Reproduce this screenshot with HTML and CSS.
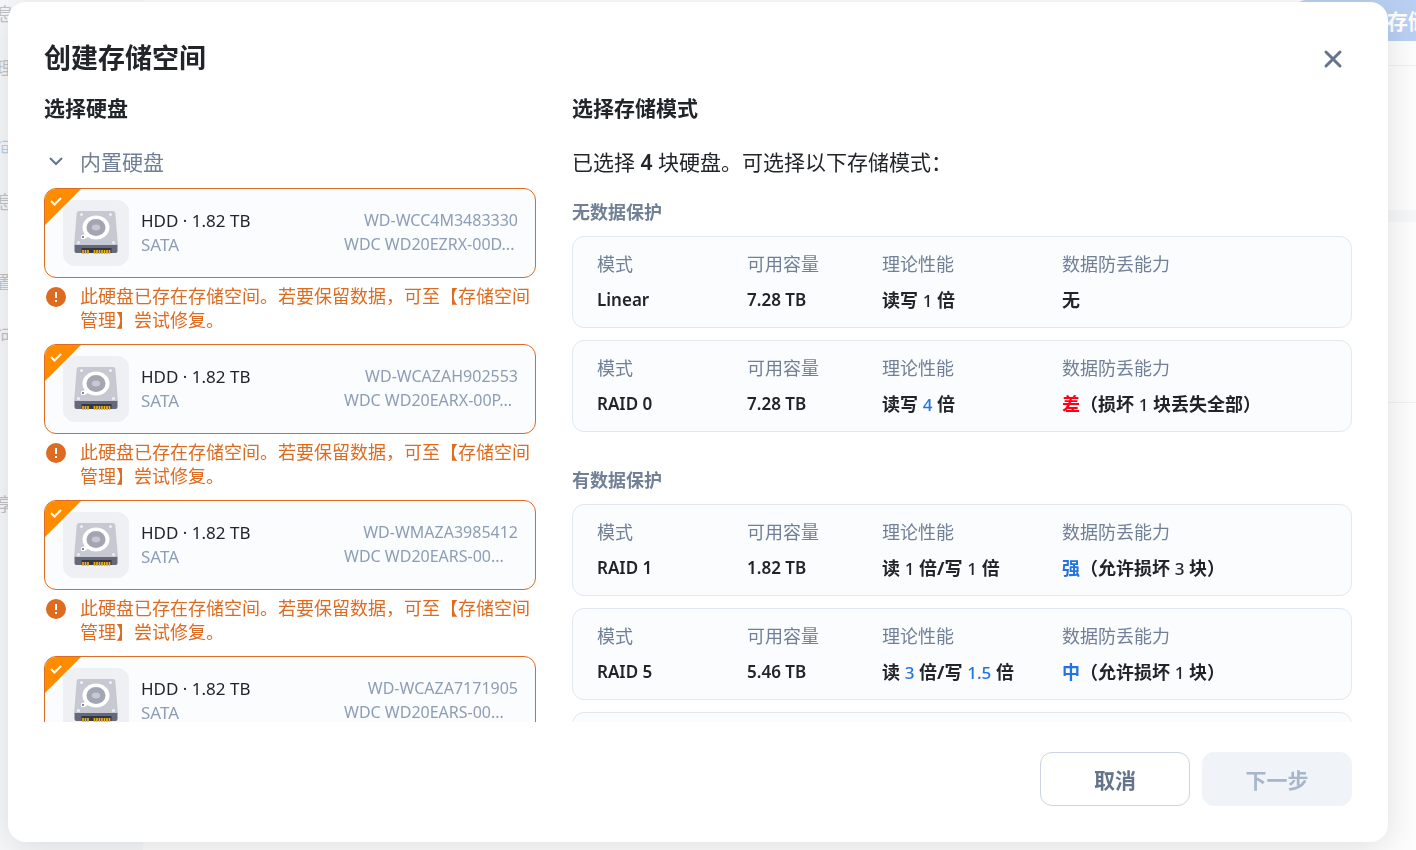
FILE: index.html
```html
<!DOCTYPE html>
<html lang="zh-CN">
<head>
<meta charset="utf-8">
<meta name="viewport" content="width=device-width, initial-scale=1">
<title>创建存储空间</title>
<link rel="stylesheet" href="styles.css">
</head>
<body>
<svg class="defs" aria-hidden="true">
  <symbol id="drive" viewBox="0 0 66 66">
    <path d="M16 11h34q2 0 2.300 2l2.700 33h-44l2.700-33q.3-2 2.300-2z" fill="#c6c8d2"/>
    <path d="M12 45h42q.5 0 .5 1v5q0 2-2 2h-39q-2 0-2-2v-5q0-1 .5-1z" fill="#666979"/>
    <path d="M18.500 48h30v5h-30z" fill="#343745"/>
    <path d="M20 50v4M22.500 50v4M25 50v4M31.500 50v4M34 50v4M36.500 50v4M39 50v4M41.500 50v4M44 50v4M46.500 50v4" stroke="#edb41c" stroke-width="1.700"/>
    <g fill="#eff0f5"><circle cx="18.500" cy="14.500" r="1.500"/><circle cx="47.500" cy="14.500" r="1.500"/><circle cx="15.500" cy="42.500" r="1.500"/><circle cx="50.500" cy="42.500" r="1.500"/></g>
    <path d="M23 32l-4 5 2 2 6-3z" fill="#fff"/>
    <circle cx="20" cy="37" r="2.200" fill="#fff"/>
    <circle cx="20" cy="37" r="1" fill="#5c6070"/>
    <ellipse cx="33" cy="27.500" rx="13.500" ry="12" fill="#fff"/>
    <ellipse cx="33" cy="27.500" rx="9.500" ry="8.500" fill="#a2a5b2"/>
    <ellipse cx="33" cy="27.500" rx="4.200" ry="3" fill="#c6c8d2"/>
  </symbol>
  <symbol id="check" viewBox="0 0 12 12"><path d="M1 6l3.500 3.500L11 3" fill="none" stroke="#fff" stroke-width="2"/></symbol>
  <symbol id="alert" viewBox="0 0 20 20"><circle cx="10" cy="10" r="10" fill="#dd6b20"/><path d="M9 5h2v6H9zM9 13h2v2H9z" fill="#fff"/></symbol>
</svg>

<div class="page" aria-hidden="true">
  <div class="side">
    <span class="side-item">息</span>
    <span class="side-item">理</span>
    <span class="side-item active">间</span>
    <span class="side-item">息</span>
    <span class="side-item">置</span>
    <span class="side-item">问</span>
    <span class="side-item last">享</span>
  </div>
  <div class="main">
    <div class="toolbar"><span class="create">创建存储空间</span></div>
    <div class="panel"><div class="meter"></div></div>
  </div>
</div>

<div class="overlay">
<section class="dialog" role="dialog" aria-modal="true" aria-labelledby="title">
  <header class="dialog-head">
    <h1 id="title">创建存储空间</h1>
    <button class="close" type="button" aria-label="关闭"><svg viewBox="0 0 24 24"><path d="M5 5l14 14M19 5L5 19"/></svg></button>
  </header>

  <div class="columns">
    <section class="column">
      <h2>选择硬盘</h2>
      <button class="group" type="button" aria-expanded="true"><svg viewBox="0 0 24 24"><path d="M6 8l6 6 6-6"/></svg>内置硬盘</button>
      <div class="scroll drives">
        <div class="drive">
          <label class="drive-card"><input type="checkbox" checked><svg class="tick"><use href="#check"/></svg><span class="thumb"><svg><use href="#drive"/></svg></span><span class="kind"><b>HDD · 1.82 TB</b><span>SATA</span></span><span class="model"><span class="serial">WD-WCC4M3483330</span><span>WDC WD20EZRX-00D...</span></span></label>
          <p class="warn"><svg><use href="#alert"/></svg><span>此硬盘已存在存储空间。若要保留数据，可至【存储空间管理】尝试修复。</span></p>
        </div>
        <div class="drive">
          <label class="drive-card"><input type="checkbox" checked><svg class="tick"><use href="#check"/></svg><span class="thumb"><svg><use href="#drive"/></svg></span><span class="kind"><b>HDD · 1.82 TB</b><span>SATA</span></span><span class="model"><span class="serial">WD-WCAZAH902553</span><span>WDC WD20EARX-00P...</span></span></label>
          <p class="warn"><svg><use href="#alert"/></svg><span>此硬盘已存在存储空间。若要保留数据，可至【存储空间管理】尝试修复。</span></p>
        </div>
        <div class="drive">
          <label class="drive-card"><input type="checkbox" checked><svg class="tick"><use href="#check"/></svg><span class="thumb"><svg><use href="#drive"/></svg></span><span class="kind"><b>HDD · 1.82 TB</b><span>SATA</span></span><span class="model"><span class="serial">WD-WMAZA3985412</span><span>WDC WD20EARS-00...</span></span></label>
          <p class="warn"><svg><use href="#alert"/></svg><span>此硬盘已存在存储空间。若要保留数据，可至【存储空间管理】尝试修复。</span></p>
        </div>
        <div class="drive">
          <label class="drive-card"><input type="checkbox" checked><svg class="tick"><use href="#check"/></svg><span class="thumb"><svg><use href="#drive"/></svg></span><span class="kind"><b>HDD · 1.82 TB</b><span>SATA</span></span><span class="model"><span class="serial">WD-WCAZA7171905</span><span>WDC WD20EARS-00...</span></span></label>
        </div>
      </div>
    </section>

    <section class="column">
      <h2>选择存储模式</h2>
      <p class="lead">已选择 <b>4</b> 块硬盘。可选择以下存储模式：</p>
      <div class="scroll modes">
        <h3>无数据保护</h3>
        <dl class="mode">
          <div><dt>模式</dt><dd class="value">Linear</dd></div>
          <div><dt>可用容量</dt><dd class="value">7.28 TB</dd></div>
          <div><dt>理论性能</dt><dd>读写 <span class="num">1</span> 倍</dd></div>
          <div><dt>数据防丢能力</dt><dd>无</dd></div>
        </dl>
        <dl class="mode">
          <div><dt>模式</dt><dd class="value">RAID 0</dd></div>
          <div><dt>可用容量</dt><dd class="value">7.28 TB</dd></div>
          <div><dt>理论性能</dt><dd>读写 <em class="num">4</em> 倍</dd></div>
          <div><dt>数据防丢能力</dt><dd><em class="bad">差</em>（损坏 <span class="num">1</span> 块丢失全部）</dd></div>
        </dl>
        <h3 class="next">有数据保护</h3>
        <dl class="mode">
          <div><dt>模式</dt><dd class="value">RAID 1</dd></div>
          <div><dt>可用容量</dt><dd class="value">1.82 TB</dd></div>
          <div><dt>理论性能</dt><dd>读 <span class="num">1</span> 倍/写 <span class="num">1</span> 倍</dd></div>
          <div><dt>数据防丢能力</dt><dd><em>强</em>（允许损坏 <span class="num">3</span> 块）</dd></div>
        </dl>
        <dl class="mode">
          <div><dt>模式</dt><dd class="value">RAID 5</dd></div>
          <div><dt>可用容量</dt><dd class="value">5.46 TB</dd></div>
          <div><dt>理论性能</dt><dd>读 <em class="num">3</em> 倍/写 <em class="num">1.5</em> 倍</dd></div>
          <div><dt>数据防丢能力</dt><dd><em>中</em>（允许损坏 <span class="num">1</span> 块）</dd></div>
        </dl>
        <div class="mode more"></div>
      </div>
    </section>
  </div>

  <footer class="actions">
    <button class="btn" type="button">取消</button>
    <button class="btn primary" type="button" disabled>下一步</button>
  </footer>
</section>
</div>
</body>
</html>
```

FILE: styles.css
```css
* { box-sizing: border-box; }
html, body { height: 100%; }
body {
  margin: 0;
  overflow: hidden;
  background: #fff;
  color: #212529;
  font-family: "Noto Sans", "Noto Sans CJK SC", sans-serif;
  font-size: 18px;
  line-height: 24px;
}
h1, h2, h3, p, dl, dd { margin: 0; }
button { font: inherit; cursor: pointer; }
.defs { position: absolute; width: 0; height: 0; }

/* Dimmed page under the dialog */
.page { display: flex; height: 100%; }
.side {
  display: flex;
  flex-direction: column;
  width: 143px;
  background: #f7f8fa;
  color: #c3c4c6;
}
.side-item { height: 54px; line-height: 28px; text-indent: -4px; }
.side-item.active { color: #b8d0f2; }
.side-item:nth-child(2), .side-item:nth-child(4) { height: 80px; }
.side-item.last { margin-top: 114px; }
.main { flex: 1; background: #fdfdfd; }
.toolbar {
  display: flex;
  justify-content: flex-end;
  height: 66px;
  border-bottom: 1px solid #f0f1f2;
}
.create {
  width: 122px;
  height: 41px;
  overflow: hidden;
  padding-left: 51px;
  border-radius: 12px 0 0 12px;
  background: #bad0f2;
  color: #fff;
  font-size: 21px;
  font-weight: 700;
  line-height: 42px;
  white-space: nowrap;
}
.panel { height: 337px; padding-top: 144px; border-bottom: 1px solid #f0f1f2; }
.meter { height: 12px; background: #f6f7f9; }

.overlay { position: fixed; inset: 0; display: flex; padding: 2px 28px 8px 8px; }
.dialog {
  display: flex;
  flex: 1;
  flex-direction: column;
  min-width: 0;
  padding: 36px;
  border-radius: 18px;
  background: #fff;
  box-shadow: 0 6px 36px rgba(0, 0, 0, .12);
}
.dialog-head { display: flex; justify-content: space-between; align-items: center; height: 42px; margin-bottom: 12px; }
h1 { font-size: 27px; line-height: 40px; padding-bottom: 2px; }
.close { width: 38px; height: 36px; padding: 6px 7px; border: 0; background: none; }
.close svg { display: block; width: 24px; height: 24px; fill: none; stroke: #64748b; stroke-width: 3; stroke-linecap: round; }

.columns { display: grid; grid-template-columns: 41fr 65fr; gap: 36px; flex: 1; min-height: 0; }
.column { display: flex; flex-direction: column; min-width: 0; min-height: 0; }
h2 { font-size: 21px; line-height: 32px; margin-bottom: 22px; }
.group {
  display: flex;
  align-items: center;
  gap: 12px;
  height: 32px;
  margin-bottom: 10px;
  padding: 0;
  border: 0;
  background: none;
  color: #718096;
  font-size: 21px;
}
.group svg { width: 24px; height: 24px; fill: none; stroke: #64748b; stroke-width: 2; }
.lead { margin-bottom: 22px; font-size: 21px; line-height: 32px; }
.lead b { font-weight: 600; }
.scroll { flex: 1; min-height: 0; overflow: hidden; }

.drive { margin-bottom: 12px; }
.drive-card {
  position: relative;
  display: flex;
  align-items: center;
  height: 90px;
  padding: 0 17px 0 18px;
  overflow: hidden;
  border: 1px solid #dd6b20;
  border-radius: 12px;
  background: #fbfcfe;
}
.drive-card input {
  position: absolute;
  top: 0;
  left: 0;
  width: 36px;
  height: 36px;
  margin: 0;
  appearance: none;
  background: #ff8c00;
  clip-path: polygon(0 0, 100% 0, 0 100%);
}
.tick { position: absolute; top: 6px; left: 5px; width: 12px; height: 12px; }
.thumb { width: 66px; height: 66px; margin-right: 12px; border-radius: 12px; background: #eff0f4; }
.thumb svg { display: block; width: 66px; height: 66px; }
.kind, .model { display: flex; flex-direction: column; color: #8c9db5; }
.kind { flex: 1; font-size: 17px; }
.kind b { color: #212529; font-weight: 400; }
.model { width: 174px; padding-bottom: 2px; font-size: 16px; white-space: nowrap; }
.serial { text-align: right; }
.warn { display: flex; gap: 14px; padding: 6px 0 0 2px; color: #dd6b20; }
.warn svg { flex: none; width: 20px; height: 20px; margin-top: 3px; }

h3 { margin-bottom: 12px; color: #718096; font-size: 18px; line-height: 24px; }
h3.next { margin-top: 36px; }
.mode {
  display: grid;
  grid-template-columns: 150px 135px 180px 1fr;
  margin-bottom: 12px;
  padding: 15px 24px;
  border: 1px solid #e2e8f0;
  border-radius: 12px;
  background: #fbfcfe;
}
.more { height: 92px; }
dt { margin-bottom: 12px; color: #718096; }
dd { height: 24px; font-weight: 700; }
.value { font-size: 17px; font-weight: 600; }
.num { font-size: 17px; font-weight: 500; }
em { color: #2374e1; font-style: normal; }
.bad { color: #ff0018; }

.actions { display: flex; justify-content: flex-end; gap: 12px; margin-top: 30px; }
.btn {
  width: 150px;
  height: 54px;
  padding: 2px 0 0;
  border: 1px solid #cbd5e1;
  border-radius: 12px;
  background: #fff;
  color: #64748b;
  font-size: 21px;
  font-weight: 700;
}
.primary { border-color: #f0f3f8; background: #f0f3f8; color: #a7b6ca; }
```
